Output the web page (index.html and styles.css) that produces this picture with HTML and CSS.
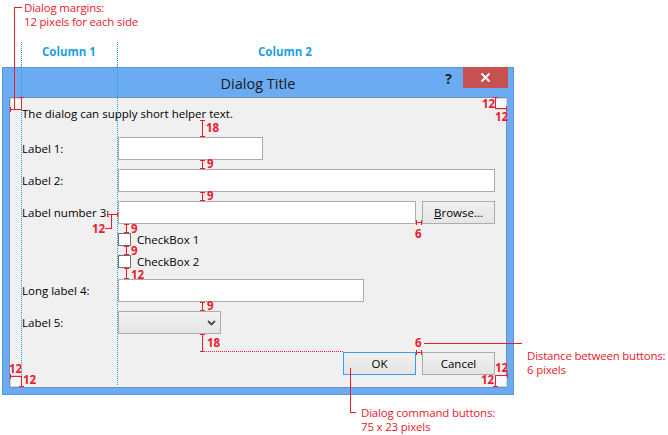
FILE: index.html
```html
<!DOCTYPE html>
<html>
<head>
<meta charset="utf-8">
<link rel="stylesheet" href="styles.css">
</head>
<body>
<div class="page">
  <div class="col-heads">
    <span class="col-head col-one">Column 1</span>
    <span class="col-head">Column 2</span>
  </div>

  <div class="dialog">
    <div class="titlebar">
      <span class="title">Dialog Title</span>
      <span class="help">?</span>
      <span class="close">
        <svg width="11" height="11" viewBox="0 0 11 11"><path d="M1.5 1.5 L9.5 9.5 M9.5 1.5 L1.5 9.5" stroke="#fff" stroke-width="1.8" fill="none"/></svg>
      </span>
    </div>
    <div class="client">
      <p class="helper">The dialog can supply short helper text.</p>
      <div class="row">
        <span class="label">Label 1:</span>
        <span class="textbox tb-short"></span>
      </div>
      <div class="row gap9">
        <span class="label">Label 2:</span>
        <span class="textbox tb-full"></span>
      </div>
      <div class="row gap9">
        <span class="label">Label number 3:</span>
        <span class="textbox tb-grow"></span>
        <span class="btn btn-browse"><u>B</u>rowse...</span>
      </div>
      <div class="row check-row gap9">
        <span class="label"></span>
        <span class="checkbox"></span>
        <span class="check-text">CheckBox 1</span>
      </div>
      <div class="row check-row gap9">
        <span class="label"></span>
        <span class="checkbox"></span>
        <span class="check-text">CheckBox 2</span>
      </div>
      <div class="row gap11">
        <span class="label">Long label 4:</span>
        <span class="textbox tb-mid"></span>
      </div>
      <div class="row gap9">
        <span class="label">Label 5:</span>
        <span class="combo">
          <svg width="9" height="6" viewBox="0 0 9 6"><path d="M1 1 L4.5 4.5 L8 1" stroke="#4a4a4a" stroke-width="1.8" fill="none"/></svg>
        </span>
      </div>
      <div class="spacer"></div>
      <div class="buttons">
        <span class="btn btn-default">OK</span>
        <span class="btn">Cancel</span>
      </div>
    </div>
  </div>

  <svg class="overlay" width="668" height="435" viewBox="0 0 668 435">
    <g stroke="#1e9fe6" stroke-width="1" stroke-dasharray="1 1" fill="none">
      <path d="M21.5 42 V386"/>
      <path d="M117.5 42 V386"/>
    </g>
    <g class="corner-boxes" fill="#f9f9f9" stroke="#d4d4d4">
      <rect x="10.5" y="98.5" width="11" height="11"/>
      <rect x="495.5" y="98.5" width="11" height="11"/>
      <rect x="10.5" y="375.5" width="11" height="11"/>
      <rect x="495.5" y="375.5" width="11" height="11"/>
    </g>
    <g stroke="#ec1c2b" stroke-width="1" fill="none" shape-rendering="crispEdges">
      <path d="M22 7.5 H14.5 V109"/>
      <path d="M10 109.5 H22 M10.5 107 V112"/>
      <path d="M21.5 97 V110 M19 97.5 H24"/>
      <path d="M495.5 97 V109 M493 97.5 H498"/>
      <path d="M495 108.5 H507 M506.5 106 V111"/>
      <path d="M10 376.5 H22 M10.5 374 V379"/>
      <path d="M21.5 376 V387 M19 386.5 H24"/>
      <path d="M495 375.5 H508 M507.5 373 V378"/>
      <path d="M495.5 375 V387 M493 386.5 H498"/>
      <path d="M202.5 120 V137 M200 120.5 H205 M200 136.5 H205"/>
      <path d="M202.5 160 V169 M200 160.5 H205 M200 168.5 H205"/>
      <path d="M202.5 192 V201 M200 192.5 H205 M200 200.5 H205"/>
      <path d="M126.5 224 V233 M124 224.5 H129 M124 232.5 H129"/>
      <path d="M126.5 246 V255 M124 246.5 H129 M124 254.5 H129"/>
      <path d="M126.5 268 V279 M124 268.5 H129 M124 278.5 H129"/>
      <path d="M202.5 302 V311 M200 302.5 H205 M200 310.5 H205"/>
      <path d="M202.5 334 V352 M200 334.5 H205 M200 351.5 H205"/>
      <path d="M416 222.5 H422 M416.5 220 V225 M421.5 220 V225"/>
      <path d="M416 352.5 H422 M416.5 350 V355 M421.5 350 V355"/>
      <path d="M107 214.5 H118 M107.5 212 V217 M117.5 212 V217"/>
      <path d="M111.5 214 V228.5 H105"/>
      <path d="M424 343.5 H522"/>
      <path d="M350.5 368 V412.5 H356"/>
      <path d="M202 351.5 H343" stroke-dasharray="1 1"/>
    </g>
  </svg>

  <div class="note note-margins">Dialog margins:<br>12 pixels for each side</div>
  <div class="note note-distance">Distance between buttons:<br>6 pixels</div>
  <div class="note note-command">Dialog command buttons:<br>75 x 23 pixels</div>

  <span class="num n1">18</span>
  <span class="num n2">9</span>
  <span class="num n3">9</span>
  <span class="num n4">12</span>
  <span class="num n5">6</span>
  <span class="num n6">9</span>
  <span class="num n7">9</span>
  <span class="num n8">12</span>
  <span class="num n9">9</span>
  <span class="num n10">18</span>
  <span class="num n11">6</span>
  <span class="num n12">12</span>
  <span class="num n13">12</span>
  <span class="num n14">12</span>
  <span class="num n15">12</span>
  <span class="num n16">12</span>
  <span class="num n17">12</span>
</div>
</body>
</html>
```

FILE: styles.css
```css
* { box-sizing: border-box; }

body {
  margin: 0;
  background: #ffffff;
  font-family: "Open Sans", "Noto Sans", "Liberation Sans", sans-serif;
  font-size: 11.5px;
  color: #000;
}

.page {
  position: relative;
  width: 668px;
  height: 435px;
  overflow: hidden;
}

.col-heads {
  display: flex;
  height: 67px;
  padding-top: 44px;
  padding-left: 42px;
  line-height: 16px;
}

.col-head {
  color: #1ba1e2;
  font-weight: 700;
  font-size: 11.5px;
}

.col-one { width: 216px; }

.dialog {
  margin-left: 2px;
  width: 512px;
  height: 328px;
  background: #6aabf2;
  border: 1px solid #5d97db;
  padding: 0 6px 6px 6px;
  display: flex;
  flex-direction: column;
}

.titlebar {
  position: relative;
  height: 29px;
  flex: none;
}

.title {
  display: block;
  text-align: center;
  line-height: 29px;
  font-size: 14.5px;
  color: #1a1a1a;
  padding-top: 1px;
}

.help {
  position: absolute;
  right: 55px;
  top: 3px;
  font-size: 14px;
  font-weight: 700;
  color: #222;
  line-height: 16px;
}

.close {
  position: absolute;
  right: -1px;
  top: -1px;
  width: 45px;
  height: 21px;
  background: #c75050;
  display: flex;
  align-items: center;
  justify-content: center;
}

.client {
  flex: 1;
  background: #f0f0f0;
  border: 1px solid #6e8fbf;
  padding: 8px 11px 12px 12px;
  display: flex;
  flex-direction: column;
}

.helper {
  margin: 0 0 15px 0;
  line-height: 16px;
  height: 16px;
  white-space: nowrap;
}

.row {
  display: flex;
  align-items: center;
  height: 23px;
  flex: none;
}

.gap9 { margin-top: 9px; }
.gap11 { margin-top: 11px; }

.check-row { height: 13px; }

.label {
  width: 96px;
  flex: none;
  white-space: nowrap;
}

.textbox {
  display: block;
  height: 23px;
  background: #fff;
  border: 1px solid #ababab;
}

.tb-short { width: 145px; }
.tb-full { flex: 1; }
.tb-grow { flex: 1; margin-right: 6px; }
.tb-mid { width: 246px; }

.checkbox {
  width: 13px;
  height: 13px;
  border: 1px solid #707070;
  background: #fff;
  flex: none;
}

.check-text {
  margin-left: 6px;
  line-height: 13px;
}

.combo {
  width: 103px;
  height: 23px;
  border: 1px solid #acacac;
  background: linear-gradient(#f2f2f2, #e5e5e5);
  display: flex;
  align-items: center;
  justify-content: flex-end;
  padding-right: 4px;
}

.spacer { flex: 1; }

.buttons {
  display: flex;
  justify-content: flex-end;
  gap: 6px;
  height: 23px;
  flex: none;
}

.btn {
  width: 73px;
  height: 23px;
  border: 1px solid #acacac;
  background: linear-gradient(#f0f0f0, #e5e5e5);
  display: flex;
  align-items: center;
  justify-content: center;
  line-height: 16px;
  flex: none;
}

.btn u { text-decoration: underline; }

.btn-default { border-color: #3c9af0; }

.overlay {
  position: absolute;
  left: 0;
  top: 0;
  pointer-events: none;
}

.note {
  position: absolute;
  color: #e8202c;
  font-size: 11.5px;
  line-height: 14px;
  white-space: nowrap;
  letter-spacing: -0.2px;
}

.note-margins { left: 24px; top: 1px; }
.note-distance { left: 527px; top: 349px; }
.note-command { left: 361px; top: 406px; }

.num {
  position: absolute;
  color: #e8202c;
  font-size: 11.5px;
  font-weight: 700;
  line-height: 12px;
  white-space: nowrap;
}

.n1 { left: 206px; top: 122px; }
.n2 { left: 207px; top: 158px; }
.n3 { left: 207px; top: 190px; }
.n4 { left: 92px; top: 223px; }
.n5 { left: 415px; top: 228px; }
.n6 { left: 131px; top: 223px; }
.n7 { left: 131px; top: 245px; }
.n8 { left: 131px; top: 269px; }
.n9 { left: 207px; top: 300px; }
.n10 { left: 207px; top: 337px; }
.n11 { left: 415px; top: 337px; }
.n12 { left: 482px; top: 98px; }
.n13 { left: 495px; top: 111px; }
.n14 { left: 9px; top: 363px; }
.n15 { left: 23px; top: 374px; }
.n16 { left: 495px; top: 362px; }
.n17 { left: 481px; top: 374px; }
```
